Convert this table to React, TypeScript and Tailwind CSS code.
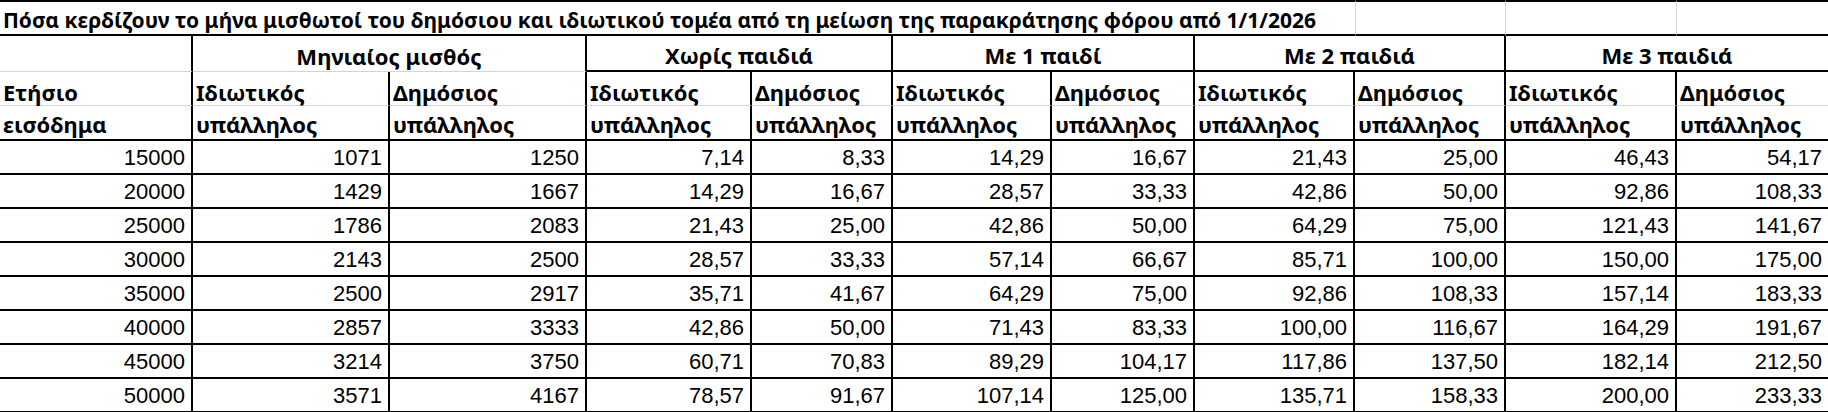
import React from 'react';

const widths = [193, 197, 197, 165, 141, 159, 143, 160, 151, 171, 151];

const rows: string[][] = [
  ['15000', '1071', '1250', '7,14', '8,33', '14,29', '16,67', '21,43', '25,00', '46,43', '54,17'],
  ['20000', '1429', '1667', '14,29', '16,67', '28,57', '33,33', '42,86', '50,00', '92,86', '108,33'],
  ['25000', '1786', '2083', '21,43', '25,00', '42,86', '50,00', '64,29', '75,00', '121,43', '141,67'],
  ['30000', '2143', '2500', '28,57', '33,33', '57,14', '66,67', '85,71', '100,00', '150,00', '175,00'],
  ['35000', '2500', '2917', '35,71', '41,67', '64,29', '75,00', '92,86', '108,33', '157,14', '183,33'],
  ['40000', '2857', '3333', '42,86', '50,00', '71,43', '83,33', '100,00', '116,67', '164,29', '191,67'],
  ['45000', '3214', '3750', '60,71', '70,83', '89,29', '104,17', '117,86', '137,50', '182,14', '212,50'],
  ['50000', '3571', '4167', '78,57', '91,67', '107,14', '125,00', '135,71', '158,33', '200,00', '233,33'],
];

const groups = [
  { label: 'Μηνιαίος μισθός', bottom: 'border-b border-b-[#d4d4d4]' },
  { label: 'Χωρίς παιδιά', bottom: 'border-b-2 border-b-black' },
  { label: 'Με 1 παιδί', bottom: 'border-b-2 border-b-black' },
  { label: 'Με 2 παιδιά', bottom: 'border-b-2 border-b-black' },
  { label: 'Με 3 παιδιά', bottom: 'border-b-2 border-b-black' },
];

const title = "font-['Noto_Sans',sans-serif] font-bold text-[21px] leading-[26px] text-black";
const head = "font-['Noto_Sans',sans-serif] font-bold text-[22px] leading-[26px] text-black";
const num = "font-['Liberation_Sans',Arial,sans-serif] text-[22px] leading-[24px] text-black";

export default function App() {
  const sub: [string, string][] = [['Ετήσιο', 'εισόδημα']];
  for (let i = 0; i < 5; i++) {
    sub.push(['Ιδιωτικός', 'υπάλληλος']);
    sub.push(['Δημόσιος', 'υπάλληλος']);
  }

  return (
    <div className="w-[1828px] h-[412px] overflow-hidden bg-white">
      <div
        className="grid"
        style={{ gridTemplateColumns: widths.map((w) => `${w}px`).join(' ') }}
      >
        {/* title row */}
        <div className={`col-span-8 h-[36px] border-t-2 border-b-2 border-black flex items-end pb-[1px] pl-[3px] whitespace-nowrap ${title}`}>
          Πόσα κερδίζουν το μήνα μισθωτοί του δημόσιου και ιδιωτικού τομέα από τη μείωση της παρακράτησης φόρου από 1/1/2026
        </div>
        <div className="h-[36px] border-t-2 border-b-2 border-black border-l border-l-[#d4d4d4] border-r border-r-[#d4d4d4]" />
        <div className="h-[36px] border-t-2 border-b-2 border-black border-r border-r-[#d4d4d4]" />
        <div className="h-[36px] border-t-2 border-b-2 border-black" />

        {/* group row */}
        <div className="h-[36px] border-r-2 border-r-black border-b border-b-[#d4d4d4]" />
        {groups.map((g, i) => (
          <div
            key={g.label}
            className={`col-span-2 h-[36px] flex items-end justify-center pb-[2px] ${i < 4 ? 'border-r-2 border-r-black' : ''} ${g.bottom} ${head}`}
          >
            {g.label}
          </div>
        ))}

        {/* sub header, first line */}
        {sub.map((s, i) => (
          <div
            key={`a${i}`}
            className={`h-[34px] flex items-end pl-[3px] border-b border-b-[#d4d4d4] ${i < 10 ? 'border-r-2 border-r-black' : ''} ${head} leading-[24px]`}
          >
            {s[0]}
          </div>
        ))}
        {/* sub header, second line */}
        {sub.map((s, i) => (
          <div
            key={`b${i}`}
            className={`h-[35px] flex items-end pb-[2px] pl-[3px] border-b-2 border-b-black ${i < 10 ? 'border-r-2 border-r-black' : ''} ${head}`}
          >
            {s[1]}
          </div>
        ))}

        {/* data */}
        {rows.map((r, ri) =>
          r.map((v, ci) => (
            <div
              key={`${ri}-${ci}`}
              className={`h-[34px] flex items-end justify-end pb-[3px] pr-[6px] border-b-2 border-b-black ${ci < 10 ? 'border-r-2 border-r-black' : ''} ${num}`}
            >
              {v}
            </div>
          ))
        )}
      </div>
    </div>
  );
}
